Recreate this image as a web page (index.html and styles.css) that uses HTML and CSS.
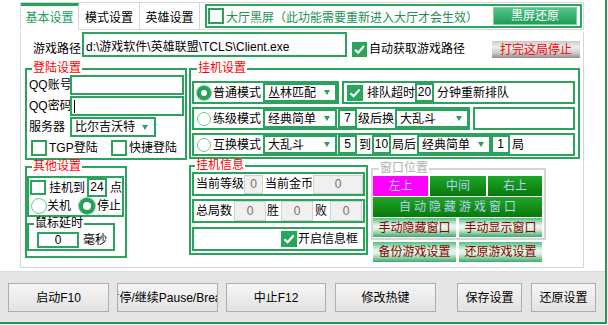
FILE: index.html
```html
<!DOCTYPE html>
<html lang="zh-CN">
<head>
    <meta charset="UTF-8">
    <title>挂机设置</title>
    <link rel="stylesheet" href="styles.css">
</head>
<body>
<div class="window">
    <div class="main">
        <div class="tab-head">
            <div class="tab tab-1 active">基本设置</div>
            <div class="tab tab-2">模式设置</div>
            <div class="tab tab-3">英雄设置</div>
            <div class="tab-rest">
                <div class="hall-box">
                    <span class="check"></span>
                    <span class="hall-text">大厅黑屏（此功能需要重新进入大厅才会生效）</span>
                    <button class="btn-green">黑屏还原</button>
                </div>
            </div>
        </div>

        <div class="tab-body">
            <div class="path-row">
                <span class="path-label">游戏路径</span>
                <div class="path-input">d:\游戏软件\英雄联盟\TCLS\Client.exe</div>
                <span class="check on"></span>
                <span class="path-auto">自动获取游戏路径</span>
                <button class="btn-stop">打完这局停止</button>
            </div>

            <div class="columns">
                <div class="col-left">
                    <fieldset class="group login">
                        <legend>登陆设置</legend>
                        <div class="form-row">
                            <span class="form-label">QQ账号</span>
                            <div class="text-box"></div>
                        </div>
                        <div class="form-row">
                            <span class="form-label">QQ密码</span>
                            <div class="text-box"><span class="caret"></span></div>
                        </div>
                        <div class="form-row">
                            <span class="form-label">服务器</span>
                            <div class="select srv">比尔吉沃特<i class="arrow"></i></div>
                        </div>
                        <div class="cb-row">
                            <span class="cb-item tgp"><span class="check"></span>TGP登陆</span>
                            <span class="cb-item"><span class="check"></span>快捷登陆</span>
                        </div>
                    </fieldset>

                    <fieldset class="group other">
                        <legend>其他设置</legend>
                        <div class="sub-box">
                            <div class="sub-line1">
                                <span class="check"></span>
                                <span class="t-hang">挂机到</span>
                                <div class="nbox n24">24</div>
                                <span class="t-dian">点</span>
                            </div>
                            <div class="sub-line2">
                                <span class="radio"></span><span>关机</span>
                                <span class="radio on r-stop"></span><span>停止</span>
                            </div>
                        </div>
                        <fieldset class="group delay">
                            <legend>鼠标延时</legend>
                            <div class="delay-row">
                                <div class="nbox n-delay">0</div>
                                <span class="t-ms">毫秒</span>
                            </div>
                        </fieldset>
                    </fieldset>
                </div>

                <div class="col-right">
                    <fieldset class="group hang">
                        <legend>挂机设置</legend>
                        <div class="hang-rows">
                            <div class="hrow">
                                <div class="hbox box-a">
                                    <span class="radio on"></span>
                                    <span class="mode">普通模式</span>
                                    <div class="select hsel">丛林匹配<i class="arrow"></i></div>
                                </div>
                                <div class="hbox box-b">
                                    <span class="check on"></span>
                                    <span class="t-queue">排队超时</span>
                                    <div class="nbox">20</div>
                                    <span class="t-requeue">分钟重新排队</span>
                                </div>
                            </div>
                            <div class="hrow">
                                <div class="hbox box-c">
                                    <span class="radio"></span>
                                    <span class="mode">练级模式</span>
                                    <div class="select hsel">经典简单<i class="arrow"></i></div>
                                    <div class="nbox gap1">7</div>
                                    <span class="gap1">级后换</span>
                                    <div class="select hsel gap1">大乱斗<i class="arrow"></i></div>
                                </div>
                                <div class="hbox box-d"></div>
                            </div>
                            <div class="hrow">
                                <div class="hbox box-e">
                                    <span class="radio"></span>
                                    <span class="mode">互换模式</span>
                                    <div class="select hsel">大乱斗<i class="arrow"></i></div>
                                    <div class="nbox gap1">5</div>
                                    <span class="t-to">到</span>
                                    <div class="nbox gap1">10</div>
                                    <span class="gap1">局后</span>
                                    <div class="select hsel gap1">经典简单<i class="arrow"></i></div>
                                    <div class="nbox">1</div>
                                    <span class="t-ju">局</span>
                                </div>
                            </div>
                        </div>
                    </fieldset>

                    <div class="lower">
                        <fieldset class="group info">
                            <legend>挂机信息</legend>
                            <div class="info-rows">
                                <div class="irow irow1">
                                    <span>当前等级</span>
                                    <div class="ro ro-level">0</div>
                                    <span class="t-gold">当前金币</span>
                                    <div class="ro ro-gold">0</div>
                                </div>
                                <div class="irow irow2">
                                    <span>总局数</span>
                                    <div class="ro ro-s m2">0</div>
                                    <span class="m1">胜</span>
                                    <div class="ro ro-s m2">0</div>
                                    <span class="m2">败</span>
                                    <div class="ro ro-s m3">0</div>
                                </div>
                                <div class="irow irow3">
                                    <span class="check on"></span>
                                    <span class="t-info">开启信息框</span>
                                </div>
                            </div>
                        </fieldset>

                        <div class="win-col">
                            <fieldset class="group winpos">
                                <legend>窗口位置</legend>
                                <div class="win-row first">
                                    <button class="wbtn pink w55">左上</button>
                                    <button class="wbtn green w56">中间</button>
                                    <button class="wbtn green w54">右上</button>
                                </div>
                                <div class="win-row">
                                    <button class="wbtn green wide">自动隐藏游戏窗口</button>
                                </div>
                                <div class="win-row three">
                                    <button class="wbtn light half">手动隐藏窗口</button>
                                    <button class="wbtn light half">手动显示窗口</button>
                                </div>
                            </fieldset>
                            <div class="backup-row">
                                <button class="wbtn light half">备份游戏设置</button>
                                <button class="wbtn light half">还原游戏设置</button>
                            </div>
                        </div>
                    </div>
                </div>
            </div>
        </div>
    </div>

    <div class="bottom">
        <button class="bbtn b1">启动F10</button>
        <button class="bbtn b2"><span>暂停/继续Pause/Break</span></button>
        <button class="bbtn b3">中止F12</button>
        <button class="bbtn b4">修改热键</button>
        <button class="bbtn b5">保存设置</button>
        <button class="bbtn b6">还原设置</button>
    </div>
</div>
</body>
</html>
```

FILE: styles.css
```css
* {
    box-sizing: border-box;
}

body {
    margin: 0;
    background: #fff;
    font-family: "Liberation Sans", "Noto Sans CJK SC", sans-serif;
    font-size: 12px;
    line-height: 14px;
    color: #000;
    white-space: nowrap;
}

span {
    flex-shrink: 0;
}

button {
    font-family: inherit;
    font-size: 12px;
    line-height: 14px;
    margin: 0;
    padding: 0;
    cursor: pointer;
}

.window {
    width: 607px;
    height: 324px;
    border-right: 2px solid #23985a;
    border-bottom: 2px solid #23985a;
    display: flex;
    flex-direction: column;
}

.main {
    height: 271px;
    padding: 2px 0 0 20px;
}

/* tab header */
.tab-head {
    width: 564px;
    height: 28px;
    display: flex;
    border: 1px solid #d6d6d6;
    border-bottom: none;
}

.tab {
    height: 27px;
    border-right: 1px solid #d6d6d6;
    border-bottom: 1px solid #d6d6d6;
    display: flex;
    align-items: center;
    justify-content: center;
    padding-top: 3px;
}

.tab-1 { width: 58px; }
.tab-2 { width: 61px; }
.tab-3 { width: 60px; }

.tab.active {
    border-top: 3px solid #25a25a;
    border-bottom-color: #fff;
    color: #22a05a;
    padding-top: 1px;
}

.tab-rest {
    flex: 1;
    height: 27px;
    border-bottom: 1px solid #d6d6d6;
    padding: 1px 0 0 5px;
}

.hall-box {
    width: 377px;
    height: 24px;
    border: 2px solid #2aa35d;
    display: flex;
    align-items: center;
}

.hall-box .check {
    margin-left: 1px;
}

.hall-text {
    margin-left: 2px;
    padding-top: 3px;
    color: #1d8f57;
}

.btn-green {
    margin-left: auto;
    margin-right: 3px;
    width: 84px;
    height: 18px;
    border: 1px solid #74d4a0;
    background: linear-gradient(#52c688, #1f9d57);
    color: #fff;
}

/* tab body */
.tab-body {
    width: 564px;
    height: 236px;
    border: 1px solid #d6d6d6;
    border-top: none;
}

.path-row {
    display: flex;
    align-items: flex-end;
    height: 25px;
    margin-top: 2px;
    padding-left: 12px;
}

.path-label {
    width: 49px;
    margin-bottom: 1px;
}

.path-input {
    width: 265px;
    height: 25px;
    border: 2px solid #2aa35d;
    padding: 0 0 1px 2px;
    display: flex;
    align-items: flex-end;
}

.path-row .check {
    margin-left: 5px;
    width: 15px;
    height: 15px;
}

.path-auto {
    margin-left: 2px;
    margin-bottom: 1px;
}

.btn-stop {
    margin-left: auto;
    margin-right: 3px;
    margin-bottom: -1px;
    width: 88px;
    height: 17px;
    border: none;
    background: linear-gradient(#c9c9c9 0%, #efefef 35%, #cbcbcb 70%, #8e8e8e 100%);
    color: #ff0000;
}

/* common controls */
.check {
    display: inline-block;
    flex: none;
    width: 16px;
    height: 16px;
    border: 2px solid #2aa35d;
    background: #fff;
}

.check.on {
    border: none;
    background: #27a65c url("data:image/svg+xml,%3Csvg xmlns='http://www.w3.org/2000/svg' width='16' height='16'%3E%3Cpath d='M3.5 8.2 6.6 11.2 12.6 4.6' fill='none' stroke='white' stroke-width='2.2'/%3E%3C/svg%3E") center no-repeat;
}

.radio {
    display: inline-block;
    flex: none;
    width: 15px;
    height: 15px;
    border-radius: 50%;
    border: 1px solid #6fc894;
    background: radial-gradient(#fff 55%, #e4f4ea);
}

.radio.on {
    border: 4px solid #25a05a;
    background: #fff;
    box-shadow: 0 0 0 1px #7fd0a1;
}

.select {
    display: flex;
    align-items: center;
    flex: none;
    border: 2px solid #2aa35d;
    padding-left: 3px;
    background: #fff;
}

.arrow {
    margin-left: auto;
    margin-right: 5px;
    width: 0;
    height: 0;
    border-left: 3px solid transparent;
    border-right: 3px solid transparent;
    border-top: 5px solid #27a25c;
}

.nbox {
    flex: none;
    width: 19px;
    height: 19px;
    border: 2px solid #2aa35d;
    text-align: center;
    line-height: 15px;
    background: #fff;
}

fieldset.group {
    margin: 0;
    padding: 0;
    min-width: 0;
    border: 2px solid #2aa35d;
}

fieldset.group legend {
    padding: 0 1px;
    line-height: 13px;
    color: #ff0000;
}

/* left column */
.columns {
    display: flex;
    margin-top: 5px;
    padding-left: 4px;
}

.col-left {
    width: 162px;
    flex: none;
}

.login {
    width: 162px;
    height: 98px;
}

.login legend,
.other legend {
    margin-left: 5px;
}

.form-row {
    display: flex;
    height: 21px;
}

.form-label {
    width: 43px;
    padding-left: 2px;
    line-height: 20px;
}

.text-box {
    width: 114px;
    height: 20px;
    border: 2px solid #2aa35d;
    padding: 2px 0 0 2px;
}

.caret {
    display: block;
    width: 1px;
    height: 13px;
    background: #000;
}

.srv {
    width: 86px;
    height: 20px;
}

.srv .arrow {
    margin-right: 6px;
}

.cb-row {
    display: flex;
    margin-top: 2px;
    padding-left: 4px;
}

.cb-item {
    display: flex;
    align-items: center;
}

.cb-item .check {
    margin-right: 2px;
}

.tgp {
    width: 80px;
}

.other {
    width: 102px;
    height: 98px;
    margin-top: 2px;
}

.sub-box {
    width: 97px;
    height: 41px;
    border: 2px solid #2aa35d;
    margin-top: 3px;
}

.sub-line1 {
    display: flex;
    align-items: center;
    height: 19px;
}

.sub-line1 .check {
    margin-left: 1px;
    width: 16px;
    height: 15px;
}

.t-hang {
    margin-left: 3px;
}

.n24 {
    margin-left: 2px;
    width: 20px;
}

.t-dian {
    margin-left: 3px;
}

.sub-line2 {
    display: flex;
    align-items: center;
    height: 18px;
    padding-left: 2px;
}

.sub-line2 .radio {
    width: 16px;
    height: 16px;
}

.r-stop {
    margin-left: 8px;
    margin-right: 2px;
}

.delay {
    width: 88px;
    height: 34px;
    margin: 3px 0 0 5px;
}

fieldset.delay legend {
    color: #000;
    margin-left: 5px;
}

.delay-row {
    display: flex;
    align-items: center;
    padding-left: 8px;
    margin-top: 2px;
}

.n-delay {
    width: 42px;
    height: 16px;
    line-height: 12px;
}

.t-ms {
    margin-left: 4px;
}

/* right column */
.col-right {
    margin-left: 2px;
}

.hang {
    width: 391px;
    height: 97px;
}

.hang legend {
    margin-left: 6px;
}

.hang-rows {
    display: flex;
    flex-direction: column;
    gap: 3px;
    padding: 6px 0 0 1px;
}

.hrow {
    display: flex;
    gap: 3px;
}

.hbox {
    flex: none;
    height: 23px;
    border: 2px solid #2aa35d;
    display: flex;
    align-items: center;
}

.box-a { width: 147px; }
.box-b { width: 233px; }
.box-c { width: 278px; }
.box-d { width: 102px; }
.box-e { width: 383px; }

.hbox .radio {
    margin-left: 3px;
    width: 14px;
    height: 14px;
}

.mode {
    margin-left: 2px;
    width: 48px;
}

.hsel {
    margin-left: 2px;
    width: 74px;
    height: 19px;
}

.hsel.gap1 {
    margin-left: 1px;
}

.gap1 {
    margin-left: 1px;
}

.box-b .check {
    margin-left: 3px;
}

.t-queue {
    margin-left: 4px;
    width: 48px;
}

.t-requeue {
    margin-left: 3px;
}

.t-to {
    margin-left: 2px;
}

.t-ju {
    margin-left: 2px;
}

.lower {
    display: flex;
    align-items: flex-start;
}

.info {
    width: 179px;
    height: 96px;
    margin: 6px 0 0 34px;
}

.info legend {
    margin-left: 4px;
}

.info-rows {
    padding-left: 1px;
}

.irow {
    width: 173px;
    height: 24px;
    border: 2px solid #2aa35d;
    display: flex;
    align-items: center;
    padding-left: 2px;
}

.irow2 {
    margin-top: 3px;
}

.irow3 {
    margin-top: 4px;
    justify-content: flex-end;
    padding-right: 5px;
}

.ro {
    flex: none;
    height: 19px;
    background: #f0f0f0;
    border: 1px solid #d2d2d2;
    color: #707070;
    text-align: center;
    line-height: 17px;
}

.ro-level { width: 19px; }
.t-gold { margin-left: 2px; }
.ro-gold { width: 50px; }

.irow2 .ro {
    height: 20px;
    line-height: 18px;
}

.ro-s { width: 32px; }
.m1 { margin-left: 1px; }
.m2 { margin-left: 2px; }
.m3 { margin-left: 3px; }

.t-info {
    margin-left: 1px;
}

/* window position */
.win-col {
    margin: 3px 0 0 3px;
}

.winpos {
    width: 175px;
    height: 78px;
}

fieldset.winpos {
    border-color: #d6d6d6;
}

fieldset.winpos legend {
    margin-left: 6px;
    color: #b0b0b0;
}

.win-row {
    display: flex;
    gap: 2px;
    margin-top: 1px;
}

.win-row.three {
    gap: 3px;
}

.wbtn {
    height: 20px;
    border: none;
    flex: none;
}

.w55 { width: 55px; }
.w56 { width: 56px; }
.w54 { width: 54px; }

.wide {
    width: 169px;
    letter-spacing: 3px;
    padding-left: 3px;
}

.half {
    width: 83px;
}

.win-row.three .wbtn {
    height: 19px;
}

.pink {
    background: #ff00ff;
    color: #b4ccf6;
}

.green {
    background: linear-gradient(#22a52a, #067a0a);
    color: #b0d4f2;
}

.light {
    background: linear-gradient(#52bf7f 0%, #e8f6ed 40%, #d8efe0 60%, #3aad6a 100%);
    color: #8b0000;
}

.backup-row {
    display: flex;
    gap: 3px;
    margin-top: 2px;
    padding-left: 2px;
}

/* bottom bar */
.bottom {
    height: 51px;
    background: #e6e6e6;
    border-top: 1px solid #dcdcdc;
    display: flex;
    align-items: flex-start;
    padding: 11px 0 0 8px;
}

.bbtn {
    height: 29px;
    width: 101px;
    border: 1px solid #adadad;
    background: linear-gradient(#f6f6f6, #e2e2e2);
    display: flex;
    align-items: center;
    justify-content: center;
    overflow: hidden;
    white-space: nowrap;
    flex: none;
}

.b2 { margin-left: 8px; }
.b3 { margin-left: 8px; width: 100px; }
.b4 { margin-left: 9px; }
.b5 { margin-left: 21px; width: 65px; }
.b6 { margin-left: 9px; width: 65px; }
```
